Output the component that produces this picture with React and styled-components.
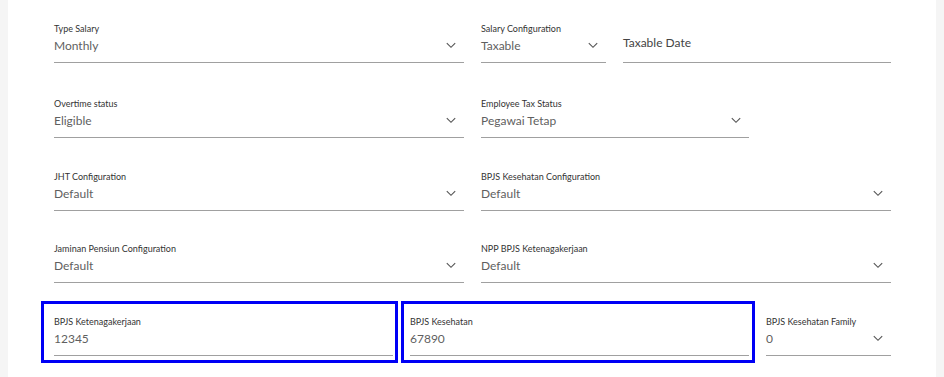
import React from "react";
import styled, { createGlobalStyle } from "styled-components";

const GlobalStyle = createGlobalStyle`
  html, body {
    margin: 0;
    padding: 0;
    background: #f5f5f5;
    font-family: Lato, "Open Sans", sans-serif;
  }
`;

const Card = styled.div`
  margin: 0 8px;
  min-height: 377px;
  background: #fff;
  padding: 23px 0 0 46px;
  box-sizing: border-box;
`;

const Row = styled.div`
  display: flex;
  gap: 17px;
  margin-bottom: ${(p) => p.spacing || 33}px;
`;

const Field = styled.div`
  position: relative;
  width: ${(p) => p.width}px;
  flex: none;
`;

const Highlight = styled.div`
  position: absolute;
  top: -15px;
  bottom: -7px;
  left: ${(p) => p.left}px;
  right: ${(p) => p.right}px;
  border: 3px solid #0000f5;
  pointer-events: none;
`;

const Label = styled.div`
  font-size: 9px;
  line-height: 12px;
  color: #333;
  white-space: nowrap;
`;

const ValueRow = styled.div`
  display: flex;
  align-items: center;
  justify-content: space-between;
  height: 20px;
  padding-bottom: 7px;
  border-bottom: 1px solid #a0a0a0;
`;

const Value = styled.span`
  font-size: 12px;
  color: #5f5f5f;
`;

const Placeholder = styled.div`
  padding: 12px 0 7px;
  box-sizing: border-box;
  height: 40px;
  border-bottom: 1px solid #a0a0a0;
  font-size: 12px;
  line-height: 16px;
  color: #444;
`;

const Chevron = styled.svg`
  width: 12px;
  height: 12px;
  margin-right: 7px;
  color: #555;
`;

const Arrow = () => (
  <Chevron viewBox="0 0 12 12" fill="none">
    <path d="M1.8 4.2L6 8.3L10.2 4.2" stroke="currentColor" strokeWidth="1.15" />
  </Chevron>
);

const SelectField = ({ label, value, width, select = true, highlight }) => (
  <Field width={width}>
    {highlight && <Highlight left={highlight[0]} right={highlight[1]} />}
    <Label>{label}</Label>
    <ValueRow>
      <Value>{value}</Value>
      {select && <Arrow />}
    </ValueRow>
  </Field>
);

const App = () => (
  <>
    <GlobalStyle />
    <Card>
      <Row spacing={35}>
        <SelectField label="Type Salary" value="Monthly" width={410} />
        <SelectField label="Salary Configuration" value="Taxable" width={125} />
        <Field width={268}>
          <Placeholder>Taxable Date</Placeholder>
        </Field>
      </Row>
      <Row>
        <SelectField label="Overtime status" value="Eligible" width={410} />
        <SelectField label="Employee Tax Status" value="Pegawai Tetap" width={268} />
      </Row>
      <Row spacing={32}>
        <SelectField label="JHT Configuration" value="Default" width={410} />
        <SelectField label="BPJS Kesehatan Configuration" value="Default" width={410} />
      </Row>
      <Row>
        <SelectField label="Jaminan Pensiun Configuration" value="Default" width={410} />
        <SelectField label="NPP BPJS Ketenagakerjaan" value="Default" width={410} />
      </Row>
      <Row>
        <SelectField
          label="BPJS Ketenagakerjaan"
          value="12345"
          width={339}
          select={false}
          highlight={[-13, -5]}
        />
        <SelectField
          label="BPJS Kesehatan"
          value="67890"
          width={339}
          select={false}
          highlight={[-9, -6]}
        />
        <SelectField label="BPJS Kesehatan Family" value="0" width={125} />
      </Row>
    </Card>
  </>
);

export default App;
